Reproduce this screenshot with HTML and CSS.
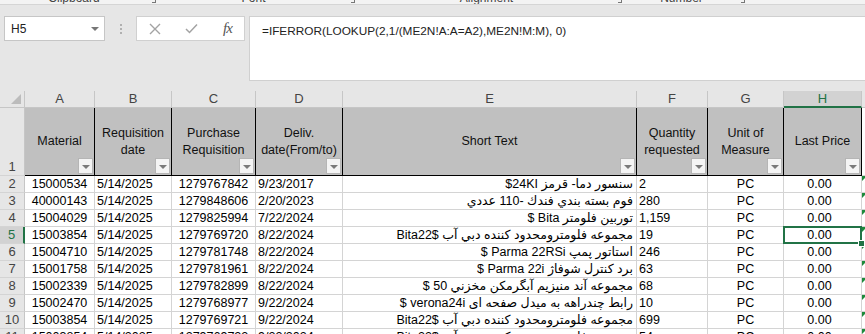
FILE: index.html
```html
<!DOCTYPE html>
<html>
<head>
    <title>Book1 - Excel</title>
    <link rel="stylesheet" href="styles.css">
</head>
<body>
    <div class="ribbon">
        <div class="rgroup" style="width:148px">Clipboard</div><div class="launcher"></div>
        <div class="rgroup" style="width:187px">Font</div><div class="launcher"></div>
        <div class="rgroup" style="width:255px">Alignment</div><div class="launcher"></div>
        <div class="rgroup" style="width:111px">Number</div><div class="launcher"></div>
    </div>

    <div class="fbar">
        <div class="namebox">
            <span>H5</span>
            <span class="nb-arrow"></span>
        </div>
        <div class="grip"><i></i><i></i><i></i></div>
        <div class="fx-btns">
            <svg width="12" height="12" viewBox="0 0 12 12"><path d="M1 1 L11 11 M11 1 L1 11" stroke="#a3a3a3" stroke-width="1.4" fill="none"/></svg>
            <svg width="13" height="11" viewBox="0 0 13 11"><path d="M1 6 L4.5 9.5 L12 1.5" stroke="#a3a3a3" stroke-width="1.5" fill="none"/></svg>
            <span class="fx">fx</span>
        </div>
        <div class="formula">=IFERROR(LOOKUP(2,1/(ME2N!A:A=A2),ME2N!M:M), 0)</div>
    </div>

    <div class="sheet">
        <!-- column headers -->
        <div class="corner"><span class="tri"></span></div>
        <div class="ch">A</div>
        <div class="ch">B</div>
        <div class="ch">C</div>
        <div class="ch">D</div>
        <div class="ch">E</div>
        <div class="ch">F</div>
        <div class="ch">G</div>
        <div class="ch active">H</div>
        <div class="ch">I</div>

        <!-- row 1: table headers -->
        <div class="rh bottom">1</div>
        <div class="hd">Material<span class="filter"></span></div>
        <div class="hd">Requisition date<span class="filter"></span></div>
        <div class="hd">Purchase Requisition<span class="filter"></span></div>
        <div class="hd">Deliv. date(From/to)<span class="filter"></span></div>
        <div class="hd">Short Text<span class="filter"></span></div>
        <div class="hd">Quantity requested<span class="filter"></span></div>
        <div class="hd">Unit of Measure<span class="filter"></span></div>
        <div class="hd">Last Price<span class="filter"></span></div>
        <div class="c"></div>

        <div class="rh">2</div>
        <div class="c ctr">15000534</div><div class="c">5/14/2025</div><div class="c ctr">1279767842</div><div class="c">9/23/2017</div>
        <div class="c rtl">سنسور دما- قرمز 24KI$</div><div class="c">2</div><div class="c ctr">PC</div><div class="c price">0.00</div><div class="c flag"></div>

        <div class="rh">3</div>
        <div class="c ctr">40000143</div><div class="c">5/14/2025</div><div class="c ctr">1279848606</div><div class="c">2/20/2023</div>
        <div class="c rtl">فوم بسته بندي فندك -110 عددي</div><div class="c">280</div><div class="c ctr">PC</div><div class="c price">0.00</div><div class="c flag"></div>

        <div class="rh">4</div>
        <div class="c ctr">15004029</div><div class="c">5/14/2025</div><div class="c ctr">1279825994</div><div class="c">7/22/2024</div>
        <div class="c rtl">توربين فلومتر Bita $</div><div class="c">1,159</div><div class="c ctr">PC</div><div class="c price">0.00</div><div class="c flag"></div>

        <div class="rh active">5</div>
        <div class="c ctr">15003854</div><div class="c">5/14/2025</div><div class="c ctr">1279769720</div><div class="c">8/22/2024</div>
        <div class="c rtl">مجموعه فلومترومحدود كننده دبي آب Bita22$</div><div class="c">19</div><div class="c ctr">PC</div><div class="c price sel">0.00<span class="handle"></span></div><div class="c flag"></div>

        <div class="rh">6</div>
        <div class="c ctr">15004710</div><div class="c">5/14/2025</div><div class="c ctr">1279781748</div><div class="c">8/22/2024</div>
        <div class="c rtl">استاتور پمپ Parma 22RSi $</div><div class="c">246</div><div class="c ctr">PC</div><div class="c price">0.00</div><div class="c flag"></div>

        <div class="rh">7</div>
        <div class="c ctr">15001758</div><div class="c">5/14/2025</div><div class="c ctr">1279781961</div><div class="c">8/22/2024</div>
        <div class="c rtl">برد کنترل شوفاژ Parma 22i $</div><div class="c">63</div><div class="c ctr">PC</div><div class="c price">0.00</div><div class="c flag"></div>

        <div class="rh">8</div>
        <div class="c ctr">15002339</div><div class="c">5/14/2025</div><div class="c ctr">1279782899</div><div class="c">8/22/2024</div>
        <div class="c rtl">مجموعه آند منيزيم آبگرمکن مخزني 50 $</div><div class="c">68</div><div class="c ctr">PC</div><div class="c price">0.00</div><div class="c flag"></div>

        <div class="rh">9</div>
        <div class="c ctr">15002470</div><div class="c">5/14/2025</div><div class="c ctr">1279768977</div><div class="c">9/22/2024</div>
        <div class="c rtl">رابط چندراهه به ميدل صفحه اى verona24i $</div><div class="c">10</div><div class="c ctr">PC</div><div class="c price">0.00</div><div class="c flag"></div>

        <div class="rh">10</div>
        <div class="c ctr">15003854</div><div class="c">5/14/2025</div><div class="c ctr">1279769721</div><div class="c">9/22/2024</div>
        <div class="c rtl">مجموعه فلومترومحدود كننده دبي آب Bita22$</div><div class="c">699</div><div class="c ctr">PC</div><div class="c price">0.00</div><div class="c flag"></div>

        <div class="rh">11</div>
        <div class="c ctr">15003854</div><div class="c">5/14/2025</div><div class="c ctr">1279769722</div><div class="c">9/22/2024</div>
        <div class="c rtl">مجموعه فلومترومحدود كننده دبي آب Bita22$</div><div class="c">54</div><div class="c ctr">PC</div><div class="c price">0.00</div><div class="c flag"></div>
    </div>
</body>
</html>
```

FILE: styles.css
```css
body {
    margin: 0;
    width: 865px;
    height: 334px;
    overflow: hidden;
    background: #e6e6e6;
    font-family: "Liberation Sans", "DejaVu Sans", sans-serif;
}
.ribbon {
    display: flex;
    height: 5px;
    overflow: hidden;
    background: #f3f3f3;
    border-bottom: 1px solid #d5d5d5;
    box-sizing: border-box;
}
.rgroup {
    text-align: center;
    font-size: 12px;
    line-height: 12px;
    margin-top: -8px;
    color: #444;
}
.launcher {
    width: 12px;
    position: relative;
}
.launcher::after {
    content: "";
    position: absolute;
    left: 4px;
    top: 0;
    width: 3px;
    height: 2px;
    border-right: 1px solid #777;
    border-bottom: 1px solid #777;
}
.fbar {
    display: flex;
    align-items: flex-start;
    height: 86px;
    box-sizing: border-box;
    padding: 11px 0 10px 4px;
}
.namebox {
    width: 101px;
    height: 25px;
    box-sizing: border-box;
    background: #fff;
    border: 1px solid #c6c6c6;
    display: flex;
    align-items: center;
    justify-content: space-between;
    padding: 0 5px 0 6px;
    font-size: 12px;
    color: #222;
}
.nb-arrow {
    width: 0;
    height: 0;
    border-left: 4px solid transparent;
    border-right: 4px solid transparent;
    border-top: 4px solid #777;
}
.grip {
    width: 31px;
    height: 25px;
    display: flex;
    flex-direction: column;
    align-items: center;
    justify-content: center;
    gap: 2px;
}
.grip i {
    width: 2px;
    height: 2px;
    background: #b0b0b0;
}
.fx-btns {
    width: 109px;
    height: 25px;
    box-sizing: border-box;
    background: #fff;
    border: 1px solid #d0d0d0;
    display: flex;
    align-items: center;
    padding-left: 12px;
    gap: 24px;
}
.fx {
    font-family: "Liberation Serif", serif;
    font-style: italic;
    font-size: 15px;
    letter-spacing: -1px;
    color: #555;
    margin-left: 1px;
}
.formula {
    flex: 1;
    margin-left: 4px;
    height: 65px;
    box-sizing: border-box;
    background: #fff;
    border: 1px solid #d0d0d0;
    border-right: none;
    padding: 6px 0 0 12px;
    font-size: 11.8px;
    line-height: 16px;
    color: #222;
}
.sheet {
    display: grid;
    grid-template-columns: 25px 70px 77px 84px 87px 294px 71px 76px 78px 40px;
    grid-template-rows: 17px 68px;
    grid-auto-rows: 17px;
    background: #fff;
    font-size: 12.5px;
}
.corner {
    background: #e6e6e6;
    border-right: 1px solid #c6c6c6;
    border-bottom: 1px solid #c6c6c6;
    display: flex;
    align-items: flex-end;
    justify-content: flex-end;
    padding: 0 3px 3px 0;
}
.tri {
    width: 0;
    height: 0;
    border-left: 10px solid transparent;
    border-bottom: 10px solid #bcbcbc;
}
.ch {
    background: #e6e6e6;
    border-right: 1px solid #c6c6c6;
    border-bottom: 1px solid #c6c6c6;
    text-align: center;
    font-size: 13px;
    line-height: 16px;
    color: #444;
}
.ch.active {
    background: #d2d2d2;
    color: #217346;
    border-bottom: 2px solid #217346;
}
.rh {
    background: #e6e6e6;
    border-right: 1px solid #c6c6c6;
    border-bottom: 1px solid #d4d4d4;
    text-align: center;
    font-size: 13px;
    line-height: 16px;
    color: #444;
}
.rh.bottom {
    display: flex;
    align-items: flex-end;
    justify-content: center;
}
.rh.active {
    background: #d2d2d2;
    color: #217346;
    border-right: 2px solid #217346;
}
.hd {
    position: relative;
    background: #c0c0c0;
    border-right: 1px solid #000;
    border-bottom: 1px solid #000;
    display: flex;
    align-items: center;
    justify-content: center;
    text-align: center;
    line-height: 17px;
    color: #111;
    padding: 0 2px;
}
.filter {
    position: absolute;
    right: 1px;
    bottom: 1px;
    width: 15px;
    height: 16px;
    box-sizing: border-box;
    background: #f4f4f4;
    border: 1px solid #b5b5b5;
}
.filter::after {
    content: "";
    position: absolute;
    left: 3px;
    top: 6px;
    border-left: 4px solid transparent;
    border-right: 4px solid transparent;
    border-top: 4px solid #7a7a7a;
}
.c {
    position: relative;
    border-right: 1px solid #d4d4d4;
    border-bottom: 1px solid #d4d4d4;
    padding: 0 2px;
    line-height: 16px;
    white-space: nowrap;
    overflow: hidden;
    color: #000;
}
.ctr {
    text-align: center;
}
.price {
    text-align: center;
    padding-right: 8px;
}
.rtl {
    direction: rtl;
    text-align: right;
    padding-right: 3px;
}
.flag::before {
    content: "";
    position: absolute;
    left: 0;
    top: 0;
    border-top: 5px solid #1e8a3c;
    border-right: 5px solid transparent;
}
.sel {
    overflow: visible;
}
.sel::after {
    content: "";
    position: absolute;
    left: -1px;
    top: -1px;
    right: -1px;
    bottom: -1px;
    border: 2px solid #217346;
}
.handle {
    position: absolute;
    right: -4px;
    bottom: -4px;
    width: 5px;
    height: 5px;
    background: #217346;
    border: 1px solid #fff;
    z-index: 2;
}
```
